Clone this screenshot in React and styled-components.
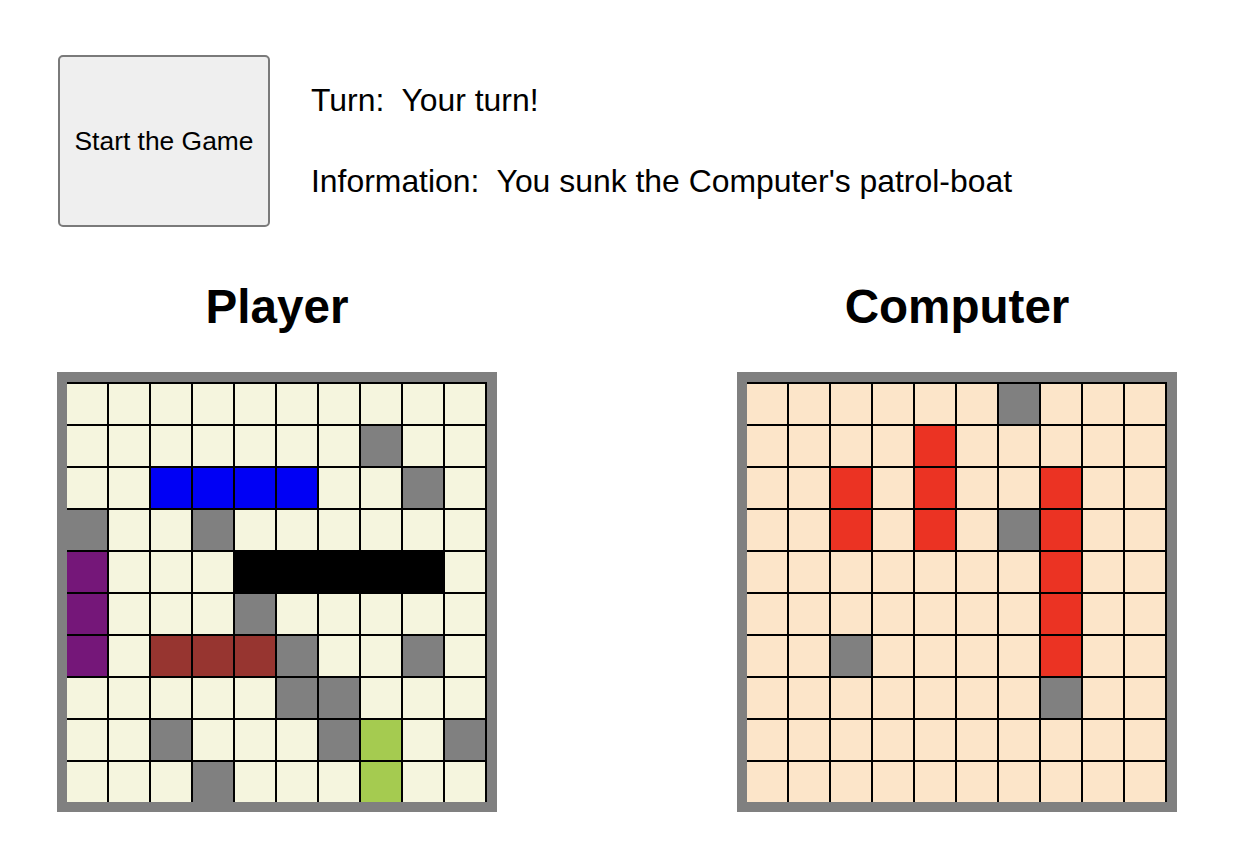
import styled, { createGlobalStyle } from "styled-components";

const GlobalStyle = createGlobalStyle`
    body {
        margin: 0;
        background: #ffffff;
        font-family: "Liberation Sans", Arial, sans-serif;
        color: #000000;
    }
`;

const playerRows = [
    "..........",
    ".......m..",
    "..BBBB..m.",
    "m..m......",
    "P...KKKKK.",
    "P...m.....",
    "P.RRRm..m.",
    ".....mm...",
    "..m...mG.m",
    "...m...G..",
];

const computerRows = [
    "......m...",
    "....H.....",
    "..H.H..H..",
    "..H.H.mH..",
    ".......H..",
    ".......H..",
    "..m....H..",
    ".......m..",
    "..........",
    "..........",
];

const cellColors = {
    m: "#808080",
    B: "#0000f5",
    K: "#000000",
    P: "#751779",
    R: "#973530",
    G: "#a5cb50",
    H: "#eb3323",
};

const Page = styled.div`
    padding: 55px 0 0 57px;
`;

const TopBar = styled.div`
    display: flex;
    align-items: flex-start;
    gap: 41px;
`;

const StartButton = styled.button`
    width: 212px;
    height: 172px;
    margin-left: 1px;
    box-sizing: border-box;
    border: 2px solid #7a7a7a;
    border-radius: 5px;
    background: #efefef;
    font-family: "Liberation Sans", Arial, sans-serif;
    font-size: 26.4px;
    color: #000000;
    padding: 0;
    cursor: pointer;
`;

const Info = styled.div`
    display: flex;
    flex-direction: column;
    gap: 45px;
    margin-top: 27px;
`;

const InfoLine = styled.p`
    margin: 0;
    font-size: 31.9px;
    line-height: 36px;
    white-space: pre;
`;

const Boards = styled.div`
    display: flex;
    gap: 240px;
    margin-top: 52px;
`;

const BoardColumn = styled.section`
    width: 440px;
    display: flex;
    flex-direction: column;
    align-items: center;
`;

const Title = styled.h2`
    margin: 0 0 38px;
    font-size: 47.6px;
    font-weight: bold;
`;

const Grid = styled.div`
    display: grid;
    grid-template-columns: repeat(10, 42px);
    grid-auto-rows: 42px;
    border: 10px solid #808080;
`;

const Cell = styled.div`
    box-sizing: border-box;
    border-top: 2px solid #000000;
    border-right: 2px solid #000000;
    background: ${(p) => cellColors[p.$kind] || p.$empty};
`;

const Board = ({ title, rows, empty }) => (
    <BoardColumn>
        <Title>{title}</Title>
        <Grid>
            {rows.map((row, r) =>
                row.split("").map((ch, c) => (
                    <Cell key={`${r}-${c}`} $kind={ch} $empty={empty} />
                ))
            )}
        </Grid>
    </BoardColumn>
);

export default function App() {
    return (
        <>
            <GlobalStyle />
            <Page>
                <TopBar>
                    <StartButton>Start the Game</StartButton>
                    <Info>
                        <InfoLine>Turn:  Your turn!</InfoLine>
                        <InfoLine>Information:  You sunk the Computer's patrol-boat</InfoLine>
                    </Info>
                </TopBar>
                <Boards>
                    <Board title="Player" rows={playerRows} empty="#f5f5de" />
                    <Board title="Computer" rows={computerRows} empty="#fce5c9" />
                </Boards>
            </Page>
        </>
    );
}
